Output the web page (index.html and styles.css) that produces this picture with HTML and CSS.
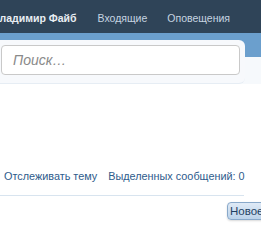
FILE: index.html
```html
<!DOCTYPE html>
<html lang="ru">
<head>
<meta charset="utf-8">
<link rel="stylesheet" href="styles.css">
</head>
<body>
<header class="navbar">
  <nav class="nav">
    <a class="nav-item nav-user">Владимир Файб</a>
    <a class="nav-item">Входящие</a>
    <a class="nav-item">Оповещения</a>
  </nav>
</header>
<div class="band">
  <div class="search-panel">
    <div class="search-input">Поиск…</div>
  </div>
</div>
<main class="content">
  <div class="thread-links">
    <a class="link">Отслеживать тему</a>
    <a class="link">Выделенных сообщений: 0</a>
  </div>
  <div class="divider"></div>
  <div class="actions">
    <button class="btn">Новое сообщение</button>
  </div>
</main>
</body>
</html>
```
FILE: styles.css
```css
html, body {
  margin: 0;
  padding: 0;
  background: #ffffff;
  overflow: hidden;
  width: 261px;
  height: 230px;
}
body {
  font-family: "Liberation Sans", Arial, sans-serif;
}
.navbar {
  height: 33px;
  background: #2f4458;
  overflow: hidden;
}
.nav {
  display: flex;
  align-items: center;
  height: 33px;
  margin-left: -8px;
  padding-top: 2px;
  box-sizing: border-box;
  white-space: nowrap;
}
.nav-item {
  font-size: 10.5px;
  color: #c6d4e1;
  margin-right: 20px;
}
.nav-user {
  font-weight: bold;
  color: #e9eef3;
  margin-right: 21px;
}
.band {
  background: linear-gradient(#6b9fcd 0, #6b9fcd 24px, #f6f9fc 24px);
  padding-top: 7px;
  padding-right: 16px;
}
.search-panel {
  background: #f7f9fc;
  border-radius: 0 6px 6px 0;
  border-bottom: 1px solid #e6edf4;
  padding: 5px 5px 8px 1px;
}
.search-input {
  height: 28px;
  border: 1px solid #c9c9c9;
  border-radius: 4px;
  background: #ffffff;
  font-style: italic;
  font-size: 14px;
  color: #8a8a8a;
  line-height: 28px;
  padding-left: 11px;
}
.content {
  background: #ffffff;
  padding-top: 86px;
}
.thread-links {
  display: flex;
  gap: 11px;
  padding-left: 4px;
  white-space: nowrap;
}
.link {
  font-size: 10.85px;
  color: #2e5b8c;
}
.divider {
  margin-top: 13px;
  width: 244px;
  height: 1px;
  background: #d8e4ef;
}
.actions {
  display: flex;
  padding-left: 227px;
  padding-top: 6px;
  white-space: nowrap;
}
.btn {
  flex: none;
  height: 18px;
  padding: 0 3px 0 2px;
  font-family: "Liberation Sans", Arial, sans-serif;
  font-size: 11.5px;
  color: #1f3f62;
  background: linear-gradient(#dfeaf6, #bcd3ea);
  border: 1px solid #89a9ca;
  border-radius: 4px;
  box-shadow: 0 1px 2px rgba(0,0,0,0.15);
}
```
